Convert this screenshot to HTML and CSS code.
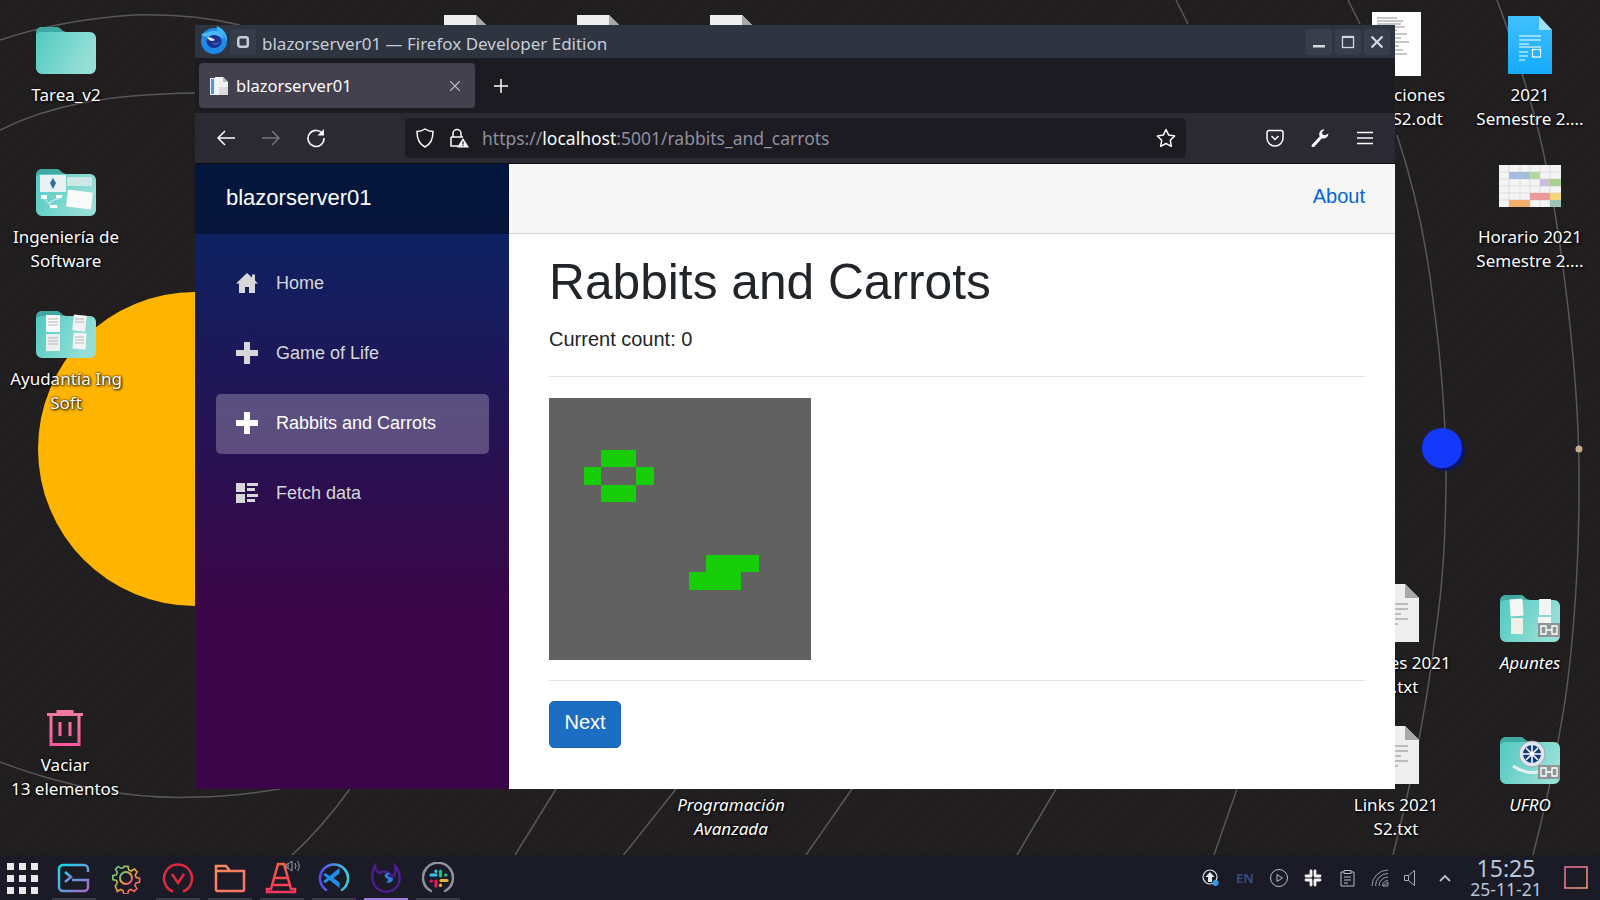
FILE: index.html
```html
<!DOCTYPE html>
<html lang="es">
<head>
  <meta charset="UTF-8">
  <title>blazorserver01 — Firefox Developer Edition</title>
  <link rel="stylesheet" href="styles.css">
</head>
<body>
  <svg class="defs" width="0" height="0">
    <defs>
      <linearGradient id="gFolder" x1="0" x2="1" y1="0" y2="0.4"><stop offset="0" stop-color="#4fc9c0"/><stop offset="1" stop-color="#95dfd6"/></linearGradient>
      <linearGradient id="gBlue" x1="0" x2="0" y1="0" y2="1"><stop offset="0" stop-color="#3fc1fd"/><stop offset="1" stop-color="#14abfa"/></linearGradient>
      <linearGradient id="gTrash" x1="0" x2="0" y1="0" y2="1"><stop offset="0" stop-color="#f07da0"/><stop offset="1" stop-color="#f9589f"/></linearGradient>
      <linearGradient id="gTerm" x1="0" x2="1" y1="0" y2="1"><stop offset="0" stop-color="#12e0ee"/><stop offset="1" stop-color="#a865c9"/></linearGradient>
      <linearGradient id="gGear" x1="0" x2="1" y1="0" y2="1"><stop offset="0" stop-color="#3fd1a0"/><stop offset="0.5" stop-color="#f3a52c"/><stop offset="1" stop-color="#f23f8d"/></linearGradient>
      <linearGradient id="gFiles" x1="0" x2="1" y1="0" y2="1"><stop offset="0" stop-color="#fb8c5a"/><stop offset="1" stop-color="#fb6f6a"/></linearGradient>
      <linearGradient id="gCone" x1="0" x2="0" y1="0" y2="1"><stop offset="0" stop-color="#f6603c"/><stop offset="1" stop-color="#f5365c"/></linearGradient>
      <linearGradient id="gCode" x1="0" x2="1" y1="0" y2="0"><stop offset="0" stop-color="#5a45f0"/><stop offset="1" stop-color="#38d0d8"/></linearGradient>
      <linearGradient id="gBox" x1="0" x2="1" y1="0" y2="1"><stop offset="0" stop-color="#f56aa0"/><stop offset="1" stop-color="#fb9a6c"/></linearGradient>
      <symbol id="folder" viewBox="0 0 60 47">
        <path d="M0 6a6 6 0 0 1 6-6h14c4 0 6 5 10 5h24a6 6 0 0 1 6 6v30a6 6 0 0 1-6 6H6a6 6 0 0 1-6-6z" fill="url(#gFolder)"/>
        <path d="M0 6a6 6 0 0 1 6-6h14c4 0 6 5 10 5H6a6 6 0 0 0-6 3z" fill="#3fa9a1"/>
      </symbol>
      <symbol id="paper" viewBox="0 0 46 58">
        <path d="M0 0h32l14 14v44H0z" fill="#eeeeee"/>
        <path d="M32 0l14 14H32z" fill="#a8a8a8"/>
        <path d="M11 20h24M11 25h24M11 30h17M11 35h24M11 40h14" stroke="#8a8a8a" stroke-width="1"/>
      </symbol>
      <symbol id="linkBadge" viewBox="0 0 22 14">
        <rect width="22" height="14" fill="#8f9698"/>
        <path d="M3 3h5v8H3zM14 3h5v8h-5zM8 7h6" fill="none" stroke="#fff" stroke-width="1.3"/>
      </symbol>
    </defs>
  </svg>

  <div class="desktop">
    <svg class="wallpaper" viewBox="0 0 1600 855">
      <g class="orbits">
        <path d="M0 40Q60 20 133 15Q190 13 240 25"/>
        <path d="M0 130C50 105 110 94 195 93"/>
        <path d="M0 762C60 785 130 800 195 797C230 797 260 792 280 789"/>
        <path d="M350 789Q320 830 290 857"/>
        <path d="M556 789L515 855"/>
        <path d="M676 789L622 857"/>
        <path d="M852 789L806 855"/>
        <path d="M1056 789L1017 855"/>
        <path d="M1237 789L1214 855"/>
        <path d="M1176 0L1188 24"/>
        <path d="M1348 0L1360 24"/>
        <path d="M1397 135C1412 180 1426 240 1433 300C1440 350 1446 420 1446 470C1446 530 1442 590 1436 630C1430 680 1420 750 1393 855"/>
        <path d="M1497 0C1512 40 1535 110 1545 160C1556 210 1578 350 1579 470C1580 580 1570 680 1560 730C1552 780 1542 820 1533 855"/>
      </g>
      <circle class="sun" cx="195" cy="449" r="157"/>
      <circle class="planet-shade" cx="1445" cy="451" r="20"/>
      <circle class="planet" cx="1442" cy="448" r="20"/>
      <circle class="moon" cx="1579" cy="449" r="3.5"/>
    </svg>

    <div class="desk-icon col-left row-1">
      <div class="slot"><svg width="60" height="47"><use href="#folder"/></svg></div>
      <span>Tarea_v2</span>
    </div>
    <div class="desk-icon col-left row-2">
      <div class="slot">
        <svg width="60" height="47" viewBox="0 0 60 47">
          <use href="#folder" width="60" height="47"/>
          <rect x="4" y="6" width="26" height="17" fill="#e8f1f4"/><path d="M17 9l3 5-3 6-3-6z" fill="#2d6f9e"/>
          <rect x="31" y="8" width="25" height="9" fill="#cfe7e4"/>
          <rect x="31" y="22" width="25" height="17" fill="#fafafa" transform="rotate(7 43 30)"/>
          <path d="M7 29l6 5 5-3 6-2M13 34l3 5 6-1" fill="none" stroke="#eef" stroke-width="1"/>
          <rect x="5" y="26" width="6" height="4" fill="#fff"/><rect x="20" y="26" width="6" height="3" fill="#fff"/><rect x="14" y="36" width="7" height="3" fill="#fff"/>
        </svg>
      </div>
      <span>Ingeniería de<br>Software</span>
    </div>
    <div class="desk-icon col-left row-3">
      <div class="slot">
        <svg width="60" height="47" viewBox="0 0 60 47">
          <use href="#folder" width="60" height="47"/>
          <rect x="10" y="4" width="14" height="17" fill="#fafafa"/><rect x="10" y="23" width="14" height="17" fill="#ecefef"/>
          <rect x="37" y="4" width="13" height="16" fill="#f2f2f2" transform="rotate(6 43 12)"/><rect x="37" y="22" width="13" height="16" fill="#f5f5f5" transform="rotate(4 43 30)"/>
          <path d="M12 8h10M12 11h10M12 14h10M12 27h10M12 30h10M12 33h10M39 8h9M39 11h9M39 26h9M39 29h9M39 32h9" stroke="#b5b5b5" stroke-width="1"/>
        </svg>
      </div>
      <span>Ayudantía Ing<br>Soft</span>
    </div>
    <div class="desk-icon col-trash row-trash">
      <div class="slot slot-trash">
        <svg width="36" height="36" viewBox="0 0 36 36" fill="none" stroke="url(#gTrash)" stroke-width="3">
          <path d="M0 4.5H36M11 4.5V1.5H25V4.5M4 5V34.5H32V5M13 12V26M23 12V26"/>
        </svg>
      </div>
      <span>Vaciar<br>13 elementos</span>
    </div>

    <div class="desk-icon col-top-1 row-top"><div class="slot"><svg width="46" height="58"><use href="#paper"/></svg></div></div>
    <div class="desk-icon col-top-2 row-top"><div class="slot"><svg width="46" height="58"><use href="#paper"/></svg></div></div>
    <div class="desk-icon col-top-3 row-top"><div class="slot"><svg width="46" height="58"><use href="#paper"/></svg></div></div>
    <div class="desk-icon col-prog row-bottom">
      <div class="slot"><svg width="60" height="47"><use href="#folder"/></svg></div>
      <span class="italic">Programación<br>Avanzada</span>
    </div>

    <div class="desk-icon col-mid row-1">
      <div class="slot slot-odt">
        <svg width="49" height="64" viewBox="0 0 49 64">
          <rect width="49" height="64" fill="#fff"/>
          <path d="M5 6h20M5 9h26M5 12h24M5 15h28M5 18h20M5 22h30M5 26h24M5 30h32M5 34h22M5 38h26M5 42h30M5 46h18" stroke="#8d8d8d" stroke-width="1"/>
        </svg>
      </div>
      <span>Anotaciones<br>2021 S2.odt</span>
    </div>
    <div class="desk-icon col-right row-1">
      <div class="slot">
        <svg width="44" height="58" viewBox="0 0 44 58">
          <path d="M0 0h31l13 14v44H0z" fill="url(#gBlue)"/>
          <path d="M31 0l13 14H31z" fill="#a0e0fb"/>
          <path d="M11 20h22M11 24h22M11 28h10M11 31h22M11 36h9M11 40h9M11 44h6" stroke="#fff" stroke-width="1.2"/>
          <rect x="24.5" y="33.5" width="8" height="7.5" fill="none" stroke="#fff" stroke-width="1.2"/>
        </svg>
      </div>
      <span>2021<br>Semestre 2....</span>
    </div>
    <div class="desk-icon col-right row-2">
      <div class="slot slot-sched">
        <svg width="62" height="42" viewBox="0 0 62 42">
          <rect width="62" height="42" fill="#f4f4f4"/>
          <path d="M0 7h62M0 14h62M0 21h62M0 28h62M0 35h62M10 0v42M21 0v42M31 0v42M41 0v42M51 0v42" stroke="#cfcfcf" stroke-width="0.6"/>
          <rect x="10" y="7" width="21" height="7" fill="#a5bde0"/><rect x="31" y="7" width="10" height="7" fill="#b5d8a0"/>
          <rect x="41" y="14" width="10" height="7" fill="#cbbfdd"/><rect x="51" y="14" width="11" height="7" fill="#a9d08e"/>
          <rect x="31" y="28" width="20" height="7" fill="#ea9a9a"/><rect x="51" y="28" width="11" height="7" fill="#f3d678"/>
          <rect x="10" y="35" width="21" height="7" fill="#f4ae6c"/><rect x="51" y="35" width="11" height="7" fill="#9cc4b8"/>
        </svg>
      </div>
      <span>Horario 2021<br>Semestre 2....</span>
    </div>
    <div class="desk-icon col-mid row-notes">
      <div class="slot"><svg width="46" height="58"><use href="#paper"/></svg></div>
      <span>Apuntes 2021<br>S2.txt</span>
    </div>
    <div class="desk-icon col-mid row-bottom">
      <div class="slot"><svg width="46" height="58"><use href="#paper"/></svg></div>
      <span>Links 2021<br>S2.txt</span>
    </div>
    <div class="desk-icon col-right row-notes">
      <div class="slot">
        <svg width="60" height="47" viewBox="0 0 60 47">
          <use href="#folder" width="60" height="47"/>
          <rect x="10" y="4" width="13" height="17" fill="#f6f6f6" transform="rotate(-4 16 12)"/><rect x="11" y="23" width="12" height="16" fill="#edf0e6"/>
          <rect x="39" y="4" width="12" height="16" fill="#f4f4f4"/><rect x="38" y="22" width="13" height="8" fill="#f4f4f4"/>
          <use href="#linkBadge" x="38" y="28" width="22" height="14"/>
        </svg>
      </div>
      <span class="italic">Apuntes</span>
    </div>
    <div class="desk-icon col-right row-bottom">
      <div class="slot">
        <svg width="60" height="47" viewBox="0 0 60 47">
          <use href="#folder" width="60" height="47"/>
          <circle cx="32" cy="17" r="13" fill="#dfe6ec" stroke="#9aa8b8"/>
          <circle cx="32" cy="17" r="9" fill="#123a80"/>
          <path d="M32 8v18M23 17h18M26 11l12 12M38 11L26 23" stroke="#fff" stroke-width="1.6"/>
          <path d="M13 29q18 12 36 2" fill="none" stroke="#e8f0f0" stroke-width="3"/>
          <use href="#linkBadge" x="38" y="28" width="22" height="14"/>
        </svg>
      </div>
      <span class="italic">UFRO</span>
    </div>

    <div class="window">
      <div class="titlebar">
        <svg class="ff-logo" width="28" height="28" viewBox="0 0 28 28">
          <circle cx="14" cy="15" r="13" fill="#1c8ae6"/>
          <path d="M17 0c-1 3 0 5 2 6 4 2 7 6 8 10C28 9 24 3 17 0z" fill="#35b6f7"/>
          <path d="M1 9c2-2 4-3 6-2 4-3 10-3 14 0 2 2 3 4 3 6-3-3-7-4-11-3-4 1-9 1-12-1z" fill="#48b9f5"/>
          <ellipse cx="14" cy="15.5" rx="7.500" ry="6.500" fill="#1d2f8f"/>
          <path d="M7 11c3 0 6 1 8 3-3 2-6 1-8-3z" fill="#d9edfa"/>
          <path d="M12 16c2 2 5 2 8-1-1 4-6 6-8 1z" fill="#3f67c9"/>
        </svg>
        <div class="pin-btn">
          <svg width="14" height="14" viewBox="0 0 14 14" fill="none" stroke="#c9ced6" stroke-width="2.5"><rect x="2.250" y="2.250" width="9.500" height="9.500" rx="2"/></svg>
        </div>
        <span class="window-title">blazorserver01 — Firefox Developer Edition</span>
        <div class="win-btns">
          <div class="win-btn"><svg width="14" height="14" viewBox="0 0 14 14"><rect x="1" y="10" width="12" height="2.5" fill="#d4d8de"/></svg></div>
          <div class="win-btn"><svg width="14" height="14" viewBox="0 0 14 14" fill="none" stroke="#d4d8de"><rect x="1.5" y="1.5" width="11" height="11" stroke-width="1.3"/><path d="M1 2h12" stroke-width="2"/></svg></div>
          <div class="win-btn"><svg width="14" height="14" viewBox="0 0 14 14" stroke="#d4d8de" stroke-width="2.2"><path d="M1.5 1.5l11 11M12.5 1.5l-11 11"/></svg></div>
        </div>
      </div>

      <div class="tabbar">
        <div class="tab">
          <svg class="favicon" width="20" height="20" viewBox="0 0 20 20">
            <path d="M1 2h7v17H1z" fill="#e8eef4"/><path d="M2 3h3v15H2z" fill="#4a9bdc"/>
            <path d="M6 1h8l5 5v13H6z" fill="#f2f2f2"/><path d="M14 1l5 5h-5z" fill="#bbb"/>
            <rect x="10" y="11" width="9" height="8" fill="#d9dde0"/>
          </svg>
          <span class="tab-title">blazorserver01</span>
          <svg class="tab-close" width="10" height="10" viewBox="0 0 10 10" stroke="#c4c4cb" stroke-width="1.2"><path d="M0 0l10 10M10 0L0 10"/></svg>
        </div>
        <svg class="new-tab" width="16" height="16" viewBox="0 0 16 16" stroke="#fbfbfe" stroke-width="1.5"><path d="M8 1v14M1 8h14"/></svg>
      </div>

      <div class="navbar">
        <div class="nav-btns">
          <svg width="20" height="20" viewBox="0 0 20 20" fill="none" stroke="#fbfbfe" stroke-width="1.5"><path d="M19 10H2M9 3l-7 7 7 7"/></svg>
          <svg width="20" height="20" viewBox="0 0 20 20" fill="none" stroke="#74737b" stroke-width="1.5"><path d="M1 10h17M11 3l7 7-7 7"/></svg>
          <svg width="20" height="20" viewBox="0 0 20 20" fill="none" stroke="#fbfbfe" stroke-width="1.6"><path d="M17 6.500A8 8 0 1 0 18 10"/><path d="M18 1v6.500h-6.500z" fill="#fbfbfe" stroke="none"/></svg>
        </div>
        <div class="urlbar">
          <svg width="18" height="20" viewBox="0 0 18 20" fill="none" stroke="#fbfbfe" stroke-width="1.5"><path d="M9 1c3 2 5 2.500 8 2.500C17 11 15 16 9 19 3 16 1 11 1 3.500 4 3.500 6 3 9 1z"/></svg>
          <svg class="lock" width="20" height="20" viewBox="0 0 20 20" fill="none" stroke="#fbfbfe" stroke-width="1.5">
            <path d="M4 9V5.500a4 4 0 0 1 8 0V9M2 9h12M2 9v9h7"/>
            <path d="M14 10l6 9.500H8z" fill="#fbfbfe" stroke="none"/>
            <path d="M14 13.500v3M14 17.300v1" stroke="#1c1b22" stroke-width="1.3"/>
          </svg>
          <span class="url">https://<b>localhost</b>:5001/rabbits_and_carrots</span>
          <svg class="star" width="20" height="20" viewBox="0 0 20 20" fill="none" stroke="#fbfbfe" stroke-width="1.5" stroke-linejoin="round"><path d="M10 1.500l2.700 5.600 6 .9-4.400 4.300 1 6L10 15.500 4.700 18.300l1-6L1.300 8l6-.9z"/></svg>
        </div>
        <div class="tool-btns">
          <svg width="18" height="18" viewBox="0 0 18 18" fill="none" stroke="#fbfbfe" stroke-width="1.5"><path d="M1 3.500A2 2 0 0 1 3 1.500h12a2 2 0 0 1 2 2V9A8 8 0 0 1 1 9z"/><path d="M5.500 7l3.500 3.500L12.500 7"/></svg>
          <svg width="18" height="18" viewBox="0 0 18 18" fill="#fbfbfe"><path d="M17.500 4.500a5 5 0 0 1-6.500 4.700L3.500 17.500a1.500 1.500 0 0 1-2.600-1.700L8.700 7.500A5 5 0 0 1 13.500.300L10.800 3.500l1 2.300 2.300.5z"/></svg>
          <svg width="16" height="14" viewBox="0 0 16 14" stroke="#fbfbfe" stroke-width="1.5"><path d="M0 1.500h16M0 7h16M0 12.500h16"/></svg>
        </div>
      </div>

      <div class="app">
        <div class="sidebar">
          <div class="brand">blazorserver01</div>
          <ul class="nav-list">
            <li class="nav-item">
              <svg width="22" height="20" viewBox="0 0 22 20" fill="#d7d7d7"><path d="M11 0L0 10.500h3V20h6v-6h4v6h6v-9.500h3l-3-3V1.500h-3v3z"/></svg>
              Home
            </li>
            <li class="nav-item">
              <svg width="22" height="22" viewBox="0 0 22 22" fill="#d7d7d7"><path d="M8 0h6v8h8v6h-8v8H8v-8H0V8h8z"/></svg>
              Game of Life
            </li>
            <li class="nav-item active">
              <svg width="22" height="22" viewBox="0 0 22 22" fill="#fff"><path d="M8 0h6v8h8v6h-8v8H8v-8H0V8h8z"/></svg>
              Rabbits and Carrots
            </li>
            <li class="nav-item">
              <svg width="22" height="20" viewBox="0 0 22 20" fill="#d7d7d7"><path d="M0 0h9v9H0zM0 11h9v9H0zM11 0h11v3H11zM11 5h8v3h-8zM11 11h11v3H11zM11 16h8v3h-8z"/></svg>
              Fetch data
            </li>
          </ul>
        </div>
        <div class="main">
          <div class="top-row"><a class="about" href="#">About</a></div>
          <div class="page">
            <h1>Rabbits and Carrots</h1>
            <p class="count">Current count: 0</p>
            <hr>
            <svg class="board" viewBox="0 0 15 15" shape-rendering="crispEdges">
              <rect width="15" height="15" fill="#616161"/>
              <g fill="#16cd08">
                <rect x="3" y="3" width="2" height="1"/>
                <rect x="2" y="4" width="1" height="1"/>
                <rect x="5" y="4" width="1" height="1"/>
                <rect x="3" y="5" width="2" height="1"/>
                <rect x="9" y="9" width="3" height="1"/>
                <rect x="8" y="10" width="3" height="1"/>
              </g>
            </svg>
            <hr>
            <button class="btn-next" type="button">Next</button>
          </div>
        </div>
      </div>
    </div>
  </div>

  <div class="taskbar">
    <div class="launcher">
      <i></i><i></i><i></i><i></i><i></i><i></i><i></i><i></i><i></i>
    </div>
    <div class="tasks">
      <div class="task open">
        <svg width="34" height="30" viewBox="0 0 34 30" fill="none" stroke="url(#gTerm)" stroke-width="2.5"><path d="M31 9V6a4 4 0 0 0-4-4H6a4 4 0 0 0-4 4v18a4 4 0 0 0 4 4h21a4 4 0 0 0 4-4v-7H15"/><path d="M8 9l6 5-6 5"/></svg>
      </div>
      <div class="task">
        <svg width="32" height="32" viewBox="0 0 32 32" fill="none" stroke="url(#gGear)" stroke-width="2"><circle cx="16" cy="16" r="6"/><path d="M13.5 1.500h5l1 4.500 3 1.300 4-2.500 3.500 3.500-2.500 4 1.300 3 4.200 1v5l-4.500 1-1.300 3 2.500 4-3.500 3.500-4-2.500-3 1.300-1 4.500h-5l-1-4.500-3-1.300-4 2.500L2.700 26l2.500-4-1.300-3-4.400-1v-5l4.400-1 1.300-3-2.500-4L6.200 1.500l4 2.500 3-1.300z" transform="translate(3.200 3.200) scale(.8)"/></svg>
      </div>
      <div class="task open">
        <svg width="32" height="32" viewBox="0 0 32 32" fill="none" stroke="#e3283c" stroke-width="2.5"><path d="M11 29.500a14 14 0 1 1 10 0"/><path d="M10 12l6 9 6-9"/></svg>
      </div>
      <div class="task open">
        <svg width="32" height="30" viewBox="0 0 32 30" fill="none" stroke="url(#gFiles)" stroke-width="2.5"><path d="M2 27V3h10l4 5h14v19a1 1 0 0 1-1 1H3z M16 8H2"/></svg>
      </div>
      <div class="task open">
        <svg width="34" height="34" viewBox="0 0 34 34" fill="none" stroke="url(#gCone)" stroke-width="2.5"><path d="M2 31h28v-3h-4L19 3h-6L6 28H2zM10 17h14M8 24h18"/></svg>
        <svg class="vol-badge" width="16" height="14" viewBox="0 0 16 14" fill="none" stroke="#9c9ca4" stroke-width="1"><path d="M1 5h2v4H1zM3 5l4-3v10l-4-3M10 4q2 3 0 6M12.5 2q3.500 5 0 10"/></svg>
      </div>
      <div class="task open">
        <svg width="32" height="32" viewBox="0 0 32 32"><path d="M9 28.500a14 14 0 1 1 14 0" fill="none" stroke="url(#gCode)" stroke-width="2.5"/><path d="M21.500 6v20L11.500 18l-4 3L5 19.500 9 16l-4-3.500L7.500 11l4 3zM21.500 11.500L15.500 16l6 4.500z" fill="#1f8fe6" fill-rule="evenodd"/></svg>
      </div>
      <div class="task active">
        <svg width="30" height="32" viewBox="0 0 30 32"><path d="M4 4C0 10 0 22 7 27c7 5 16 3 20-4 3-6 2-14-3-19 1 5 0 9-3 11-2-5-9-7-12-4-3-1-5-3-5-7z" fill="none" stroke="#4c1d8c" stroke-width="2.5"/><path d="M19 11c-5-1-7 3-4 5 3 1 3 3 0 4 3 2 7 0 7-3-1-2-6-2-5-4z" fill="#2e7fe0"/></svg>
      </div>
      <div class="task open">
        <svg width="32" height="32" viewBox="0 0 32 32" fill="none" stroke-linecap="round">
          <path d="M9 29a15 15 0 1 1 14 0" stroke="#90939e" stroke-width="2.5"/>
          <path d="M9 13h5M14 9v.5" stroke="#36c5f0" stroke-width="3.2"/>
          <path d="M18.500 9v5M24 13h-.5" stroke="#2eb67d" stroke-width="3.2"/>
          <path d="M19 18.500h6M18.500 23v.5" stroke="#ecb22e" stroke-width="3.2"/>
          <path d="M14 19v5M9 19h.5" stroke="#e01e5a" stroke-width="3.2"/>
        </svg>
      </div>
    </div>
    <div class="tray">
      <div class="tray-item">
        <svg width="18" height="18" viewBox="0 0 18 18"><circle cx="8" cy="8" r="7" fill="none" stroke="#dfe3ea" stroke-width="1.2"/><path d="M8 3l4.500 5H10v5H6V8H3.500z" fill="#e8ecf2"/><circle cx="13.5" cy="14" r="3" fill="#2a9df4"/></svg>
      </div>
      <div class="tray-item tray-lang">EN</div>
      <div class="tray-item">
        <svg width="18" height="18" viewBox="0 0 18 18" fill="none" stroke="#b8bec8" stroke-width="1"><circle cx="9" cy="9" r="8.500"/><path d="M7 5.500l5.500 3.500L7 12.500z"/></svg>
      </div>
      <div class="tray-item">
        <svg width="18" height="18" viewBox="0 0 18 18" fill="none" stroke="#f2f2f2" stroke-width="2.8" stroke-linecap="round"><path d="M7 2v5M2 7h5M11 2v5M11 7h5M16 11h-5M11 11v5M2 11h5M7 11v5"/></svg>
      </div>
      <div class="tray-item">
        <svg width="15" height="18" viewBox="0 0 15 18" fill="none" stroke="#b8bec8" stroke-width="1"><path d="M4 3H1v14h13V3h-3M4 1.500h7v3H4zM4 8h7M4 11h7M4 14h4"/></svg>
      </div>
      <div class="tray-item">
        <svg width="20" height="18" viewBox="0 0 20 18" fill="none" stroke="#9aa0aa" stroke-width="1"><path d="M1 17A16 16 0 0 1 17 1M4.500 17A12.500 12.500 0 0 1 17 4.500M8 17a9 9 0 0 1 9-9M11.5 17a5.500 5.500 0 0 1 5.500-5.500"/><path d="M12 17l5-4v4z"/></svg>
      </div>
      <div class="tray-item tray-speaker">
        <svg width="12" height="16" viewBox="0 0 12 16" fill="none" stroke="#a9afb8" stroke-width="1"><path d="M.5 5.500h4v5h-4zM4.500 5.500l6-5v15l-6-5"/></svg>
      </div>
      <div class="tray-item tray-chevron">
        <svg width="12" height="8" viewBox="0 0 12 8" fill="none" stroke="#b8bec8" stroke-width="1.8"><path d="M1 7l5-5 5 5"/></svg>
      </div>
      <div class="clock">
        <span class="clock-time">15:25</span>
        <span class="clock-date">25-11-21</span>
      </div>
      <svg class="show-desktop" width="24" height="23" viewBox="0 0 24 23" fill="none" stroke="url(#gBox)" stroke-width="1.5"><rect x="1" y="1" width="22" height="21"/><path d="M4 18h16"/></svg>
    </div>
  </div>
</body>
</html>
```

FILE: styles.css
```css
* { box-sizing: border-box; }
html, body { margin: 0; height: 100%; }
body { width: 1600px; height: 900px; overflow: hidden; display: flex; flex-direction: column; background: #211e20; font-family: "Noto Sans", sans-serif; }
.defs { position: absolute; }

/* desktop */
.desktop { position: relative; flex: 1; background-color: #211e20; background-image: repeating-linear-gradient(135deg, rgba(255,255,255,0.008) 0 2px, rgba(0,0,0,0) 2px 9px); }
.wallpaper { position: absolute; left: 0; top: 0; width: 1600px; height: 855px; }
.orbits path { fill: none; stroke: #59575a; stroke-width: 1.5; }
.sun { fill: #ffb500; }
.planet { fill: #1539fb; }
.planet-shade { fill: #0b1668; }
.moon { fill: #c9ab85; }

.desk-icon { position: absolute; width: 124px; display: flex; flex-direction: column; align-items: center; text-align: center; color: #fff; font-size: 17px; line-height: 24px; text-shadow: 1px 1px 3px #000, 0 0 2px #000; }
.slot { height: 73px; padding-bottom: 9px; display: flex; align-items: flex-end; }
.slot svg { display: block; }
.slot-odt { padding-bottom: 7px; }
.slot-sched { padding-bottom: 18px; }
.slot-trash { padding-bottom: 7px; }
.italic { font-style: italic; }
.col-left { left: 4px; }
.col-trash { left: 3px; }
.col-mid { left: 1334px; }
.col-right { left: 1468px; }
.col-top-1 { left: 405px; }
.col-top-2 { left: 538px; }
.col-top-3 { left: 671px; }
.col-prog { left: 669px; }
.row-top { top: 9px; }
.row-1 { top: 10px; }
.row-2 { top: 152px; }
.row-3 { top: 294px; }
.row-notes { top: 578px; }
.row-trash { top: 680px; }
.row-bottom { top: 720px; }

/* browser window */
.window { position: absolute; left: 195px; top: 25px; width: 1200px; height: 764px; display: flex; flex-direction: column; }
.titlebar { height: 33px; background: #2e3440; display: flex; align-items: center; padding: 0 5px; flex-shrink: 0; }
.ff-logo { margin-top: -4px; }
.pin-btn { width: 26px; height: 26px; margin-left: 2px; background: #363c49; border-radius: 3px; display: flex; align-items: center; justify-content: center; }
.window-title { margin: 3px 0 0 6px; color: #c6ccd5; font-size: 17px; }
.win-btns { margin-left: auto; display: flex; gap: 3px; }
.win-btn { width: 26px; height: 26px; background: #383e4b; border-radius: 3px; display: flex; align-items: center; justify-content: center; }

.tabbar { height: 55px; background: #1c1b22; display: flex; align-items: center; padding: 0 4px; flex-shrink: 0; }
.tab { width: 276px; height: 45px; background: #42414d; border-radius: 4px; display: flex; align-items: center; padding: 0 15px 0 10px; }
.tab-title { margin-left: 7px; color: #fbfbfe; font-size: 16.5px; }
.tab-close { margin-left: auto; }
.new-tab { margin-left: 18px; }

.navbar { height: 51px; background: #2b2a33; border-bottom: 1px solid #0c0c0d; display: flex; align-items: center; flex-shrink: 0; }
.nav-btns { width: 210px; padding-left: 21px; display: flex; gap: 25px; }
.urlbar { width: 781px; height: 40px; background: #1c1b22; border-radius: 5px; display: flex; align-items: center; padding: 0 10px 0 11px; }
.lock { margin-left: 15px; }
.url { margin-left: 13px; color: #8f8f9d; font-size: 17.5px; white-space: nowrap; }
.url b { color: #fbfbfe; font-weight: 400; }
.star { margin-left: auto; }
.tool-btns { display: flex; align-items: center; gap: 27px; margin-left: 80px; }
.tool-btns svg:last-child { margin-left: 1px; }

/* blazor app inside the browser */
.app { flex: 1; display: flex; min-height: 0; background: #fff; font-family: "Liberation Sans", Arial, sans-serif; }
.sidebar { width: 314px; background-image: linear-gradient(180deg, rgb(5, 39, 103) 0%, #3a0647 70%); }
.brand { height: 70px; background: rgba(0,0,0,0.4); color: #fff; font-size: 22px; padding: 0 0 3px 31px; display: flex; align-items: center; }
.nav-list { list-style: none; margin: 0; padding: 20px 20px 0 21px; }
.nav-item { height: 60px; margin-bottom: 10px; padding: 0 0 2px 20px; border-radius: 5px; display: flex; align-items: center; gap: 18px; color: #d7d7d7; font-size: 18px; }
.nav-item.active { background: rgba(255,255,255,0.25); color: #fff; }

.main { flex: 1; min-width: 0; }
.top-row { height: 70px; background: #f7f7f7; border-bottom: 1px solid #d6d5d5; display: flex; align-items: center; justify-content: flex-end; padding: 0 30px 4px 0; }
.about { color: #0366d6; font-size: 20px; text-decoration: none; }
.page { padding: 18px 30px 0 40px; color: #212529; font-size: 20px; line-height: 30px; }
h1 { margin: 0 0 12px; font-size: 49.7px; font-weight: 500; line-height: 60px; }
.count { margin: 0 0 22px; }
hr { margin: 20px 0; border: 0; border-top: 1px solid #e4e4e4; }
.board { display: block; width: 262px; height: 263px; }
.btn-next { width: 72px; height: 47px; padding: 0 0 4px; background: #1b6ec2; border: 1px solid #1861ac; border-radius: 5px; color: #fff; font: 20px "Liberation Sans", Arial, sans-serif; }

/* taskbar */
.taskbar { height: 45px; background: #1a1b26; display: flex; align-items: center; flex-shrink: 0; }
.launcher { width: 52px; margin-top: 2px; padding-left: 7px; display: grid; grid-template-columns: repeat(3, 7px); gap: 5px; }
.launcher i { display: block; width: 7px; height: 7px; background: #e8e8e8; }
.tasks { display: flex; gap: 8px; }
.task { position: relative; width: 44px; height: 45px; padding-top: 2px; display: flex; align-items: center; justify-content: center; border-bottom: 2px solid transparent; }
.task.open { border-bottom-color: #3b3c48; }
.task.active { border-bottom-color: #a37be0; }
.vol-badge { position: absolute; right: 3px; top: 4px; }
.tray { margin-left: auto; display: flex; align-items: center; padding-right: 12px; }
.tray-item { width: 34px; display: flex; align-items: center; justify-content: center; }
.tray-speaker { margin-left: -5px; }
.tray-chevron { margin-left: 1px; }
.tray-lang { color: #34487a; font-size: 13px; font-weight: 700; }
.clock { width: 76px; margin: 0 20px 0 6px; display: flex; flex-direction: column; align-items: center; color: #b7c7d8; }
.clock-time { font-size: 23px; line-height: 23px; }
.clock-date { font-size: 17.5px; line-height: 18px; }
```
